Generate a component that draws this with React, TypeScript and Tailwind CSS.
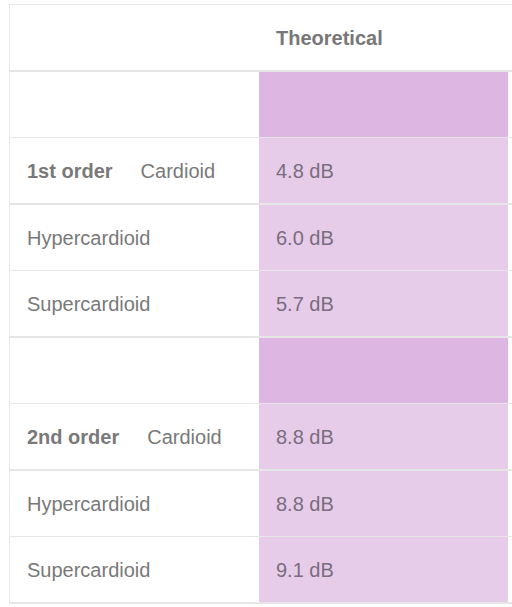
import { type JSX } from 'react';

type Row = {
  group?: string;
  pattern?: string;
  value?: string;
  thick: boolean;
};

// one blank shaded row opens each order group
const rows: Row[] = [
  { thick: false },
  { group: '1st order', pattern: 'Cardioid', value: '4.8 dB', thick: true },
  { pattern: 'Hypercardioid', value: '6.0 dB', thick: false },
  { pattern: 'Supercardioid', value: '5.7 dB', thick: true },
  { thick: false },
  { group: '2nd order', pattern: 'Cardioid', value: '8.8 dB', thick: true },
  { pattern: 'Hypercardioid', value: '8.8 dB', thick: false },
  { pattern: 'Supercardioid', value: '9.1 dB', thick: true },
];

function TableRow({ row }: { row: Row }): JSX.Element {
  const isSpacer = !row.value;
  const border = row.thick ? 'h-[67px] border-b-2' : 'h-[66px] border-b';

  return (
    <div className={`grid grid-cols-[249px_249px_200px] border-[#e6e6e6] ${border}`}>
      <div className="flex items-center pl-[17px] text-[#797979]">
        {row.group && <span className="mr-[28px] font-bold">{row.group}</span>}
        {row.pattern}
      </div>
      <div
        className={`flex items-center pl-[17px] text-[#7a6d7e] ${isSpacer ? 'bg-[#ddb6e2]' : 'bg-[#e6cce9]'}`}
      >
        {row.value}
      </div>
      <div className="bg-white" />
    </div>
  );
}

export default function App(): JSX.Element {
  return (
    <div className="h-[607px] w-[512px] overflow-hidden bg-white pl-[9px] pt-[4px] font-['Liberation_Sans',Arial,sans-serif] text-[20px]">
      <div className="w-[700px] border-l border-t border-[#e6e6e6]">
        {/* Header */}
        <div className="grid h-[67px] grid-cols-[249px_249px_200px] border-b-2 border-[#e6e6e6]">
          <div />
          <div className="flex items-center pl-[17px] font-bold text-[#777777]">Theoretical</div>
          <div />
        </div>

        {/* Body */}
        {rows.map((row, i) => (
          <TableRow key={i} row={row} />
        ))}
      </div>
    </div>
  );
}
